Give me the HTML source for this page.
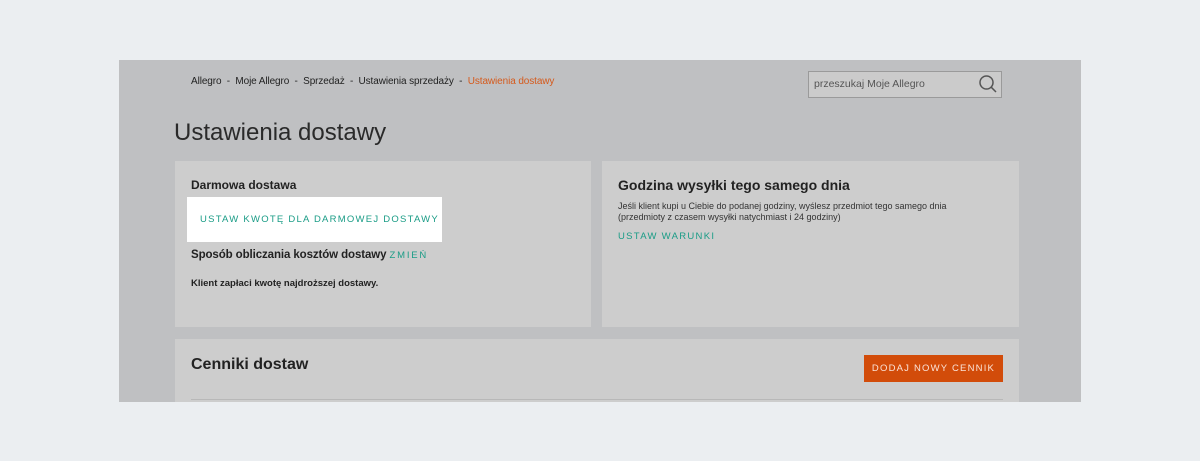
<!DOCTYPE html>
<html><head><meta charset="utf-8"><style>
*{margin:0;padding:0;box-sizing:border-box}
body{width:1200px;height:461px;background:#ebeef1;font-family:"Liberation Sans",sans-serif;position:relative;overflow:hidden}
.p{position:absolute;left:119px;top:60px;width:962px;height:342px;background:#bfc0c2}
.a{position:absolute;white-space:nowrap}
.c{position:absolute;background:#cdcdcd}
.t{color:#1a9c86;letter-spacing:1.3px;font-size:9.5px}
</style></head><body>
<div class="p"></div>
<div class="a" style="left:191px;top:76px;font-size:10px;color:#222;letter-spacing:-0.1px">Allegro &nbsp;-&nbsp; Moje Allegro &nbsp;-&nbsp; Sprzedaż &nbsp;-&nbsp; Ustawienia sprzedaży &nbsp;-&nbsp; <span style="color:#d55a1c">Ustawienia dostawy</span></div>
<div class="a" style="left:808px;top:71px;width:194px;height:27px;border:1px solid #9a9a9a;background:#cbcbcb"></div>
<div class="a" style="left:814px;top:78px;font-size:10.5px;color:#555">przeszukaj Moje Allegro</div>
<svg class="a" style="left:978px;top:74px" width="20" height="20" viewBox="0 0 20 20"><circle cx="8.5" cy="8.5" r="6.5" fill="none" stroke="#555" stroke-width="1.5"/><line x1="13.2" y1="13.2" x2="18" y2="18" stroke="#555" stroke-width="1.5"/></svg>
<div class="a" style="left:174px;top:119px;font-size:24px;color:#2a2a2a">Ustawienia dostawy</div>
<div class="c" style="left:175px;top:161px;width:416px;height:166px"></div>
<div class="c" style="left:602px;top:161px;width:417px;height:166px"></div>
<div class="c" style="left:175px;top:339px;width:844px;height:63px"></div>
<div class="a" style="left:191px;top:178px;font-size:12px;font-weight:bold;color:#222">Darmowa dostawa</div>
<div class="a" style="left:187px;top:197px;width:255px;height:45px;background:#fff"></div>
<div class="a t" style="left:200px;top:214px;font-size:9.5px;letter-spacing:1.25px">USTAW KWOTĘ DLA DARMOWEJ DOSTAWY</div>
<div class="a" style="left:191px;top:249px;font-size:11.5px;font-weight:bold;color:#222;letter-spacing:-0.1px">Sposób obliczania kosztów dostawy <span class="t" style="font-weight:normal;letter-spacing:1.8px">ZMIEŃ</span></div>
<div class="a" style="left:191px;top:278px;font-size:9.5px;font-weight:bold;color:#222">Klient zapłaci kwotę najdroższej dostawy.</div>
<div class="a" style="left:618px;top:177px;font-size:14px;font-weight:bold;color:#222">Godzina wysyłki tego samego dnia</div>
<div class="a" style="left:618px;top:201px;font-size:9px;line-height:11px;color:#333">Jeśli klient kupi u Ciebie do podanej godziny, wyślesz przedmiot tego samego dnia<br>(przedmioty z czasem wysyłki natychmiast i 24 godziny)</div>
<div class="a t" style="left:618px;top:231px">USTAW WARUNKI</div>
<div class="a" style="left:191px;top:356px;font-size:16px;font-weight:bold;color:#222">Cenniki dostaw</div>
<div class="a" style="left:864px;top:355px;width:139px;height:27px;background:#d24c0a;color:#fbe3d8;font-size:9.5px;letter-spacing:1.2px;text-align:center;line-height:27px">DODAJ NOWY CENNIK</div>
<div class="a" style="left:191px;top:399px;width:812px;height:1px;background:#b8b8b8"></div>
</body></html>
